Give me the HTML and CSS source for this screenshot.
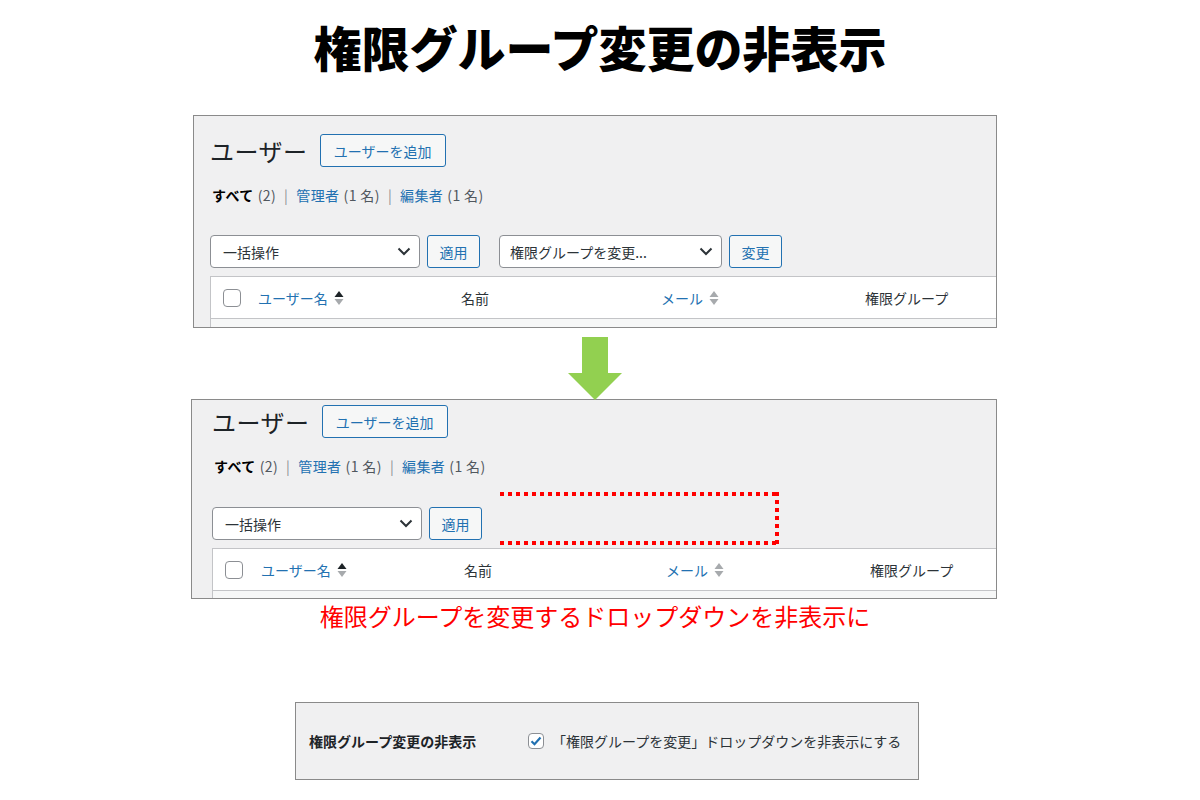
FILE: index.html
```html
<!DOCTYPE html>
<html lang="ja">
<head>
  <meta charset="UTF-8">
  <title>権限グループ変更の非表示</title>
  <link rel="stylesheet" href="styles.css">
</head>
<body>
  <h1 class="title">権限グループ変更の非表示</h1>

  <!-- BEFORE -->
  <div class="shot shot-before">
    <div class="page-head">
      <h2>ユーザー</h2>
      <span class="btn btn-add">ユーザーを追加</span>
    </div>
    <div class="subsubsub">
      <b>すべて</b><span class="count">(2)</span><span class="sep">|</span><a>管理者</a><span class="count">(1 名)</span><span class="sep">|</span><a>編集者</a><span class="count">(1 名)</span>
    </div>
    <div class="tablenav">
      <div class="select select-bulk">一括操作
        <svg width="14" height="9" viewBox="0 0 14 9"><path d="M1.5 1.5l5.5 5.5 5.5-5.5" fill="none" stroke="#2c3338" stroke-width="2"/></svg>
      </div>
      <span class="btn btn-small">適用</span>
      <div class="select select-role">権限グループを変更...
        <svg width="14" height="9" viewBox="0 0 14 9"><path d="M1.5 1.5l5.5 5.5 5.5-5.5" fill="none" stroke="#2c3338" stroke-width="2"/></svg>
      </div>
      <span class="btn btn-small">変更</span>
    </div>
    <div class="table">
      <div class="thead">
        <div class="cell cell-check"><span class="checkbox"></span></div>
        <div class="cell"><a>ユーザー名</a>
          <svg class="sort" width="10" height="16" viewBox="0 0 10 16"><path d="M5 1l4.5 6h-9z" fill="#1d2327"/><path d="M5 15l4.5-6h-9z" fill="#a7aaad"/></svg>
        </div>
        <div class="cell">名前</div>
        <div class="cell"><a>メール</a>
          <svg class="sort" width="10" height="16" viewBox="0 0 10 16"><path d="M5 1l4.5 6h-9z" fill="#a7aaad"/><path d="M5 15l4.5-6h-9z" fill="#a7aaad"/></svg>
        </div>
        <div class="cell">権限グループ</div>
      </div>
      <div class="tbody"></div>
    </div>
  </div>

  <svg class="arrow" width="54" height="63" viewBox="0 0 54 63">
    <path d="M14 0h26v36h14L27 63 0 36h14z" fill="#92d050"/>
  </svg>

  <!-- AFTER -->
  <div class="shot shot-after">
    <div class="page-head">
      <h2>ユーザー</h2>
      <span class="btn btn-add">ユーザーを追加</span>
    </div>
    <div class="subsubsub">
      <b>すべて</b><span class="count">(2)</span><span class="sep">|</span><a>管理者</a><span class="count">(1 名)</span><span class="sep">|</span><a>編集者</a><span class="count">(1 名)</span>
    </div>
    <div class="tablenav">
      <div class="select select-bulk">一括操作
        <svg width="14" height="9" viewBox="0 0 14 9"><path d="M1.5 1.5l5.5 5.5 5.5-5.5" fill="none" stroke="#2c3338" stroke-width="2"/></svg>
      </div>
      <span class="btn btn-small">適用</span>
      <div class="hidden-mark"></div>
    </div>
    <div class="table">
      <div class="thead">
        <div class="cell cell-check"><span class="checkbox"></span></div>
        <div class="cell"><a>ユーザー名</a>
          <svg class="sort" width="10" height="16" viewBox="0 0 10 16"><path d="M5 1l4.5 6h-9z" fill="#1d2327"/><path d="M5 15l4.5-6h-9z" fill="#a7aaad"/></svg>
        </div>
        <div class="cell">名前</div>
        <div class="cell"><a>メール</a>
          <svg class="sort" width="10" height="16" viewBox="0 0 10 16"><path d="M5 1l4.5 6h-9z" fill="#a7aaad"/><path d="M5 15l4.5-6h-9z" fill="#a7aaad"/></svg>
        </div>
        <div class="cell">権限グループ</div>
      </div>
      <div class="tbody"></div>
    </div>
  </div>

  <p class="caption">権限グループを変更するドロップダウンを非表示に</p>

  <!-- SETTING -->
  <div class="setting">
    <div class="setting-label">権限グループ変更の非表示</div>
    <label class="setting-field">
      <span class="checkbox checked">
        <svg width="12" height="10" viewBox="0 0 12 10"><path d="M1.5 5.2l3 3L10.5 1.5" fill="none" stroke="#2271b1" stroke-width="2.2"/></svg>
      </span>
      「権限グループを変更」ドロップダウンを非表示にする
    </label>
  </div>
</body>
</html>
```

FILE: styles.css
```css
body {
  margin: 0;
  background: #fff;
  font-family: "Noto Sans CJK JP", "Noto Sans", sans-serif;
  color: #1d2327;
  width: 1200px;
}

.title {
  margin: 16px 0 0;
  height: 99px;
  line-height: 60px;
  font-size: 48px;
  font-weight: 900;
  text-align: center;
  color: #000;
}

/* screenshot boxes */
.shot {
  box-sizing: border-box;
  background: #f0f0f1;
  border: 1px solid #8a8a8a;
  overflow: hidden;
}

.shot-before {
  margin-left: 193px;
  width: 804px;
  height: 213px;
  padding: 18px 0 0 16px;
}

.shot-after {
  margin-left: 191px;
  width: 806px;
  height: 200px;
  padding: 5px 0 0 20px;
}

.page-head {
  display: flex;
  align-items: center;
  height: 33px;
}

.page-head h2 {
  margin: 0 12px 0 0;
  font-size: 24px;
  letter-spacing: 0.5px;
  font-weight: 400;
  color: #1d2327;
  line-height: 33px;
}

.btn {
  box-sizing: border-box;
  display: inline-flex;
  align-items: center;
  justify-content: center;
  height: 33px;
  padding: 0 13px;
  border: 1px solid #2271b1;
  border-radius: 3px;
  background: #f6f7f7;
  color: #2271b1;
  font-size: 14px;
}

.btn-add {
  width: 126px;
  padding: 0;
}

.btn-small {
  width: 53px;
  padding: 0;
}

.subsubsub {
  margin-top: 18px;
  height: 20px;
  line-height: 20px;
  font-size: 14px;
  letter-spacing: 0.4px;
  padding-left: 2px;
  color: #50575e;
}

.subsubsub b {
  color: #000;
}

.subsubsub a {
  color: #2271b1;
}

.subsubsub .count {
  margin-left: 4px;
}

.subsubsub .sep {
  margin: 0 8px 0 8px;
  color: #8c8f94;
}

.tablenav {
  display: flex;
  align-items: flex-start;
  margin-top: 30px;
  height: 33px;
}

.shot-after .tablenav {
  margin-top: 31px;
}

.select {
  box-sizing: border-box;
  display: flex;
  align-items: center;
  justify-content: space-between;
  height: 33px;
  padding: 0 8px 0 12px;
  border: 1px solid #8c8f94;
  border-radius: 4px;
  background: #fff;
  color: #2c3338;
  font-size: 14px;
  margin-right: 7px;
}

.select-bulk {
  width: 210px;
}

.select-role {
  width: 223px;
  padding-left: 10px;
  margin-left: 19px;
}

.hidden-mark {
  box-sizing: border-box;
  width: 279px;
  height: 53px;
  margin: -15px 0 -5px 18px;
  background:
    repeating-linear-gradient(90deg, #f00 0 4px, transparent 4px 8px) top left / 100% 4px no-repeat,
    repeating-linear-gradient(90deg, #f00 0 4px, transparent 4px 8px) bottom left / 100% 4px no-repeat,
    repeating-linear-gradient(180deg, #f00 0 4px, transparent 4px 8px) top right / 4px 100% no-repeat;
}

/* table */
.table {
  margin-top: 8px;
  width: 900px;
  background: #fff;
  border: 1px solid #c3c4c7;
  border-right: none;
}

.thead {
  display: grid;
  grid-template-columns: 47px 203px 200px 204px 1fr;
  align-items: center;
  height: 41px;
  border-bottom: 1px solid #c3c4c7;
  font-size: 14px;
  color: #2c3338;
}

.shot-after .thead {
  grid-template-columns: 48px 203px 202px 204px 1fr;
}

.thead a {
  color: #2271b1;
}

.cell {
  display: flex;
  align-items: center;
}

.cell-check {
  padding-left: 12px;
}

.sort {
  margin-left: 6px;
}

.checkbox {
  box-sizing: border-box;
  display: inline-flex;
  align-items: center;
  justify-content: center;
  width: 18px;
  height: 18px;
  border: 1px solid #8c8f94;
  border-radius: 4px;
  background: #fff;
}

.tbody {
  height: 12px;
  background: #f6f7f7;
}

/* arrow */
.arrow {
  display: block;
  margin: 9px 0 -1px 568px;
}

.caption {
  margin: 0;
  line-height: 34px;
  font-size: 24px;
  text-align: center;
  color: #f00;
  padding-right: 10px;
}

/* setting panel */
.setting {
  box-sizing: border-box;
  display: flex;
  align-items: center;
  margin: 69px 0 0 295px;
  width: 624px;
  height: 78px;
  padding-left: 13px;
  background: #f0f0f1;
  border: 1px solid #8a8a8a;
  font-size: 14px;
}

.setting-label {
  width: 219px;
  font-weight: 700;
  color: #1d2327;
}

.setting-field {
  display: flex;
  align-items: center;
  color: #2c3338;
}

.setting-field .checkbox {
  width: 16px;
  height: 16px;
  margin-right: 8px;
}
```
